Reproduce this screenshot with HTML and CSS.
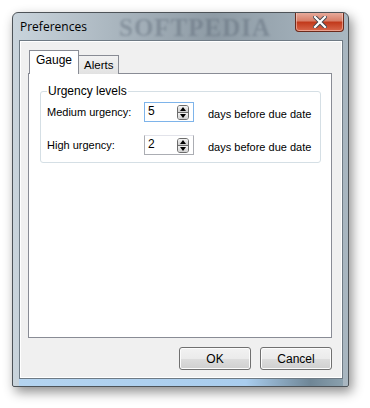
FILE: index.html
```html
<html>
  <head>
    <title>Preferences</title>
    <link rel="stylesheet" href="styles.css">
  </head>
  <body>
	<div class="window">
		<div class="titlebar">
			<span class="title">Preferences</span>
			<span class="watermark">SOFTPEDIA</span>
			<button class="close">
				<svg width="14" height="12" viewBox="0 0 14 12">
					<path d="M2 1 L12 11 M12 1 L2 11" stroke="#40464e" stroke-width="4" stroke-linecap="square"/>
					<path d="M2 1 L12 11 M12 1 L2 11" stroke="#fff" stroke-width="2.2" stroke-linecap="square"/>
				</svg>
			</button>
		</div>
		<div class="client">
			<div class="tabs">
				<div class="tab selected">Gauge</div>
				<div class="tab">Alerts</div>
			</div>
			<div class="panel">
				<fieldset class="group">
					<legend>Urgency levels</legend>
					<div class="row">
						<span class="label">Medium urgency:</span>
						<div class="spin focused">
							<span class="value">5</span>
							<div class="arrows">
								<span class="arrow up"></span>
								<span class="arrow down"></span>
							</div>
						</div>
						<span class="suffix">days before due date</span>
					</div>
					<div class="row">
						<span class="label">High urgency:</span>
						<div class="spin">
							<span class="value">2</span>
							<div class="arrows">
								<span class="arrow up"></span>
								<span class="arrow down"></span>
							</div>
						</div>
						<span class="suffix">days before due date</span>
					</div>
				</fieldset>
			</div>
			<div class="buttons">
				<button class="btn">OK</button>
				<button class="btn">Cancel</button>
			</div>
		</div>
	</div>
  </body>
</html>
```

FILE: styles.css
```css
body {
	margin: 0;
	background-color: #fff;
	font-family: 'Liberation Sans', Arial, sans-serif;
	font-size: 11px;
	color: #000;
}

.window {
	margin: 12px 0 0 12px;
	width: 337px;
	height: 375px;
	box-sizing: border-box;
	border: 1px solid #4d5358;
	border-radius: 6px 6px 2px 2px;
	background: linear-gradient(to right, #c9d4dc 0%, #aab6bf 30%, #8e9ba5 60%, #a9b7c1 100%);
	box-shadow: 3px 5px 12px rgba(0, 0, 0, 0.45);
	display: flex;
	flex-direction: column;
	position: relative;
}

.titlebar {
	height: 27px;
	flex-shrink: 0;
	display: flex;
	align-items: center;
	padding-left: 7px;
	position: relative;
	overflow: hidden;
	border-radius: 5px 5px 0 0;
}

.title {
	font-family: 'Open Sans', 'Liberation Sans', sans-serif;
	font-size: 12px;
	color: #000;
	position: relative;
	z-index: 1;
}

.watermark {
	position: absolute;
	left: 106px;
	top: 3px;
	font-family: 'Liberation Serif', serif;
	font-weight: bold;
	font-size: 25px;
	line-height: 24px;
	letter-spacing: 1px;
	color: rgba(70, 85, 100, 0.32);
	filter: blur(0.8px);
}

.close {
	position: absolute;
	right: 4px;
	top: -1px;
	width: 49px;
	height: 20px;
	border: 1px solid #6b2a1c;
	border-top: none;
	border-radius: 0 0 4px 4px;
	background-color: #c8462c;
	background-image: linear-gradient(to bottom, #e8b0a2 0%, #d8806a 45%, #c23a1c 55%, #d8684c 100%);
	box-shadow: inset 0 0 0 1px rgba(255, 220, 210, 0.5);
	padding: 0;
	display: flex;
	align-items: center;
	justify-content: center;
}

.client {
	flex: 1;
	margin: 0 5px 7px 6px;
	background-color: #f0f0f0;
	border: 1px solid #6e7a84;
	box-shadow: inset 0 0 0 1px #fff;
	display: flex;
	flex-direction: column;
	padding: 8px 10px 9px 8px;
	min-height: 0;
}

.window::after {
	content: '';
	position: absolute;
	left: 6px;
	right: 5px;
	bottom: 0;
	height: 7px;
	background: linear-gradient(to right, #b4d4f0 0%, #a9cdee 70%, #6f8696 90%, #8aa0ad 100%);
}

.tabs {
	display: flex;
	align-items: flex-end;
	height: 24px;
	flex-shrink: 0;
	padding-left: 1px;
	position: relative;
	z-index: 1;
}

.tab {
	height: 19px;
	line-height: 19px;
	padding: 0 5px;
	border: 1px solid #898c95;
	border-bottom: none;
	border-left: none;
	background: linear-gradient(to bottom, #f2f2f2, #e2e2e2);
	box-sizing: border-box;
	margin-bottom: -1px;
	font-size: 11.5px;
}

.tab.selected {
	height: 24px;
	line-height: 19px;
	padding: 0 6px;
	background: #fff;
	border-left: 1px solid #898c95;
	font-size: 12px;
}

.panel {
	height: 265px;
	box-sizing: border-box;
	flex-shrink: 0;
	background-color: #fff;
	border: 1px solid #898c95;
	padding: 10px 10px 0 11px;
}

.group {
	margin: 0;
	border: 1px solid #d5dfe5;
	border-radius: 3px;
	padding: 0 6px 7px 6px;
}

.group legend {
	padding: 0 1px;
	font-size: 12px;
	color: #000;
}

.row {
	display: flex;
	align-items: center;
	height: 20px;
	margin-top: 4px;
	white-space: nowrap;
}

.row + .row {
	margin-top: 13px;
}

.label {
	width: 97px;
	font-size: 11px;
}

.spin {
	width: 50px;
	height: 20px;
	flex-shrink: 0;
	box-sizing: border-box;
	border: 1px solid #abadb3;
	border-top-color: #e2e3ea;
	background-color: #fff;
	display: flex;
	align-items: center;
	padding: 0 4px 0 3px;
}

.spin.focused {
	border-color: #7eb4ea;
}

.value {
	flex: 1;
	font-size: 12px;
	margin-top: -2px;
}

.arrows {
	display: flex;
	flex-direction: column;
	border: 1px solid #6c6c6c;
	border-radius: 3px;
	overflow: hidden;
}

.arrow {
	width: 10px;
	height: 6px;
	background: linear-gradient(to bottom, #f4f4f4, #cfcfcf);
	position: relative;
}

.arrow.down {
	border-top: 1px solid #6c6c6c;
}

.arrow::after {
	content: '';
	position: absolute;
	left: 2px;
	border-left: 3px solid transparent;
	border-right: 3px solid transparent;
}

.arrow.up::after {
	top: 1px;
	border-bottom: 4px solid #000;
}

.arrow.down::after {
	top: 1px;
	border-top: 4px solid #000;
}

.suffix {
	margin-left: 14px;
	font-size: 11px;
	margin-top: 3px;
}

.buttons {
	display: flex;
	justify-content: flex-end;
	gap: 9px;
	margin-top: 9px;
	flex-shrink: 0;
}

.btn {
	width: 72px;
	height: 23px;
	border: 1px solid #707070;
	border-radius: 3px;
	background: linear-gradient(to bottom, #f2f2f2 0%, #ebebeb 50%, #dddddd 51%, #cfcfcf 100%);
	box-shadow: inset 0 0 0 1px #fcfcfc;
	font-family: 'Liberation Sans', Arial, sans-serif;
	font-size: 12px;
	color: #000;
	padding: 0;
}
```
